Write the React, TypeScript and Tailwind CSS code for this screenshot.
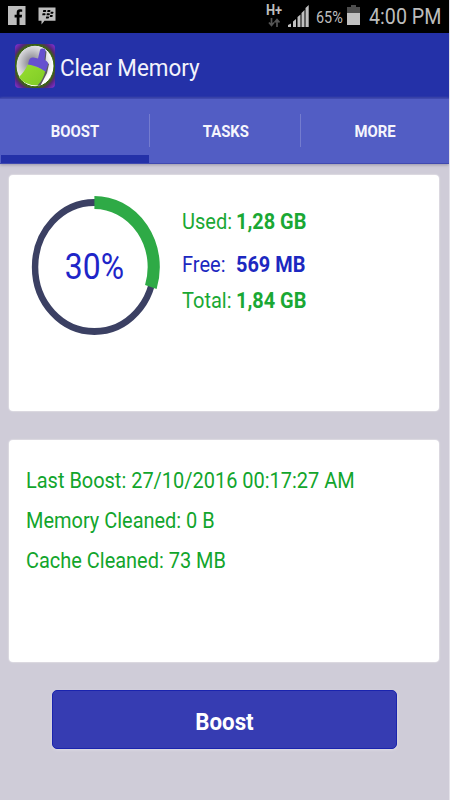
import type { ReactNode } from "react";

function Label({ className, children }: { className: string; children: ReactNode }) {
  return <span className={"inline-block whitespace-pre " + className}>{children}</span>;
}

function StatusBar() {
  return (
    <header className="flex h-[33px] shrink-0 items-start bg-black text-[#bdbdbd]">
      <svg className="ml-2 mt-[6px] h-[19px] w-[18px]" viewBox="0 0 18 19">
        <rect width="17.5" height="19" fill="#bdbdbd" />
        <path d="M14.2 3.4v2.4h-1.5c-1 0-1.2.5-1.2 1.2v1.8h2.6l-.4 2.7h-2.2V19H8.7v-7.5H6.6V8.800h2.100V6.600c0-2.200 1.300-3.300 3.300-3.300z" fill="#000" />
      </svg>
      <svg className="ml-3 mt-[7px] h-[18px] w-[18px]" viewBox="0 0 18 18">
        <path d="M.5.500h17v13.200H6.500L3.500 17.500v-3.800h-3z" fill="#bdbdbd" />
        <g fill="#000">
          <path d="M5.300 3h2.500l.6 1-.8 1H4.900zM9.600 3h2.400l.6 1-.8 1H9.200zM4.600 6.200h2.500l.6 1-.8 1H4.200zM8.900 6.200h2.500l.6 1-.8 1H8.500zM12.800 4.700h2.300l.5 1-.8 1h-2.400zM12.100 8h2.300l.5 1-.8 1h-2.400zM8.200 9.400h2.400l.6 1-.8 1H7.800z" />
        </g>
      </svg>
      <div className="ml-[210px] flex w-[16px] flex-col">
        <Label className="mt-[3px] h-[14px] origin-left scale-x-[0.86] text-[15px] leading-[15px] font-bold">H+</Label>
        <svg className="ml-[2px] mt-[1px] h-[9px] w-[12px]" viewBox="0 0 12 9">
          <path d="M3.500 0v7M1 4.500l2.500 3 2.500-3M9 9V2M6.500 4.500l2.500-3 2.500 3" fill="none" stroke="#555" strokeWidth="1.700" />
        </svg>
      </div>
      <svg className="ml-[6px] mt-[5px] h-[22px] w-[21px]" viewBox="0 0 21 22">
        <path d="M0 22v-2l3-1.500V22zM5 22v-5.500l3-2.500v8zM9.500 22V12l3-2.500V22zM13.500 22V8l3-3v17zM17.500 22V3l3.200-3v22z" fill="#c0c0c0" />
      </svg>
      <div className="ml-[7px] mt-[6px] w-[31px]">
        <Label className="origin-left scale-x-[0.9] text-[16px] leading-[19px]">65%</Label>
      </div>
      <svg className="mt-[5px] h-[20px] w-[14px]" viewBox="0 0 14 20">
        <path d="M4 0h5v2h4v6H0V2h4z" fill="#4d4d4d" />
        <path d="M0 8h13v12H0z" fill="#c0c0c0" />
      </svg>
      <div className="ml-[8px] mt-[4px]">
        <Label className="origin-left scale-x-[0.895] text-[22px] leading-[26px]">4:00 PM</Label>
      </div>
    </header>
  );
}

function BrushIcon() {
  return (
    <svg className="ml-[15px] h-[44px] w-[40px] shrink-0" viewBox="0 0 40 44">
      <defs>
        <radialGradient id="disc" cx="0.42" cy="0.42" r="0.55">
          <stop offset="0" stopColor="#77767f" />
          <stop offset="0.6" stopColor="#cfcfd3" />
          <stop offset="1" stopColor="#fff" />
        </radialGradient>
        <radialGradient id="frame" cx="0.5" cy="0.5" r="0.7">
          <stop offset="0.700" stopColor="#3d5f16" />
          <stop offset="0.800" stopColor="#56257c" />
          <stop offset="1" stopColor="#8a30e0" />
        </radialGradient>
        <linearGradient id="bristle" x1="0" y1="0" x2="1" y2="1">
          <stop offset="0" stopColor="#98de30" />
          <stop offset="1" stopColor="#7ecb26" />
        </linearGradient>
      </defs>
      <rect width="40" height="44" rx="4" fill="url(#frame)" />
      <ellipse cx="20" cy="22" rx="19" ry="20.800" fill="url(#disc)" stroke="#356111" strokeWidth="1" />
      <path d="M28 6l3.500 1.500L30.500 17l3.500 3-2 9-6.500 12.500-3 .5L27 26z" fill="#5b5a5f" />
      <path d="M13 20Q9.500 28 4 33Q9.500 41.500 22.500 41.500Q28.500 35.500 30.500 26z" fill="url(#bristle)" />
      <path d="M25 6q.3-2 2.800-1.500 3.200.2 2.700 2.500L29.500 16q4 1.500 3.500 4.500l-2.300 7.300Q22 21.500 13 20.500l1-4q1-3.500 4.500-3l4.500 1z" fill="#6650cf" />
    </svg>
  );
}

function Tab({ text, active, last }: { text: string; active?: boolean; last?: boolean }) {
  return (
    <div className={"flex shrink-0 flex-col " + (last ? "w-[148px]" : active ? "w-[150px]" : "w-[151px]")}>
      <div className="flex h-[57px] items-center">
        <div className="flex flex-1 justify-center pl-px pt-[9px]">
          <Label className="scale-x-[0.93] text-[16px] leading-5 font-bold">{text}</Label>
        </div>
        {!last && <div className="mt-[7px] h-[33px] w-px bg-[#747ccf]" />}
      </div>
      <div className={"h-[8px] " + (active ? "ml-px mr-px bg-[#2431a8]" : "")} />
    </div>
  );
}

function Gauge() {
  return (
    <div className="grid h-[144px] w-[135px] place-items-center">
      <svg className="col-start-1 row-start-1 h-[144px] w-[135px]" viewBox="0 0 135 144">
        <g transform="translate(67.4 72) scale(0.92 1)" fill="none">
          <circle r="64.500" stroke="#3b4063" strokeWidth="7" />
          <path d="M0 -64.500A64.500 64.500 0 0 1 61.340 19.930" stroke="#2eaa46" strokeWidth="13.200" />
        </g>
      </svg>
      <Label className="col-start-1 row-start-1 scale-x-[0.885] text-[36px] leading-[40px] text-[#1e25c8]">30%</Label>
    </div>
  );
}

function Stat({ name, value, color }: { name: string; value: string; color: string }) {
  return (
    <div className={"flex h-[28px] items-center text-[22px] leading-[28px] " + color}>
      <div className="w-[54px]">
        <Label className="origin-left scale-x-[0.91]">{name}</Label>
      </div>
      <Label className="origin-left scale-x-[0.905] font-bold">{value}</Label>
    </div>
  );
}

export default function App() {
  return (
    <div className="flex h-[800px] w-[450px] flex-col overflow-hidden border-r border-[#e4e2ea] bg-[#cfccd8] font-[Roboto,sans-serif]">
      <div className="-mr-px shrink-0"><StatusBar /></div>
      <div className="flex h-[65px] shrink-0 items-center bg-[#2431a8]">
        <BrushIcon />
        <Label className="ml-[5px] mt-[4px] origin-left scale-x-[0.935] text-[24px] leading-[30px] text-[#f3f3fb]">Clear Memory</Label>
      </div>
      <nav className="flex h-[66px] shrink-0 border-t border-b border-[#4049af] bg-[#525dc4] text-[#f5f5fc] shadow-[0_1px_3px_#9896a8]">
        <Tab text="BOOST" active />
        <Tab text="TASKS" />
        <Tab text="MORE" last />
      </nav>
      <main className="flex flex-col">
        <section className="ml-[9px] mt-[11px] flex h-[236px] w-[430px] rounded-[4px] bg-white shadow-[0_0_1px_1px_#dcdae2]">
          <div className="ml-[18px] mt-[20px]"><Gauge /></div>
          <div className="ml-[20px] mt-[33px] flex flex-col">
            <Stat name="Used:" value="1,28 GB" color="text-[#1aa834]" />
            <div className="mt-[15px]"><Stat name="Free:" value="569 MB" color="text-[#1c28c0]" /></div>
            <div className="mt-[8px]"><Stat name="Total:" value="1,84 GB" color="text-[#1aa834]" /></div>
          </div>
        </section>
        <section className="ml-[9px] mt-[29px] flex h-[222px] w-[430px] flex-col items-start rounded-[4px] bg-white pl-[17px] pt-[21px] text-[22px] leading-[40px] text-[#12a52c] shadow-[0_0_1px_1px_#dcdae2]">
          <Label className="origin-left scale-x-[0.907]">Last Boost: 27/10/2016 00:17:27 AM</Label>
          <Label className="origin-left scale-x-[0.907]">Memory Cleaned: 0 B</Label>
          <Label className="origin-left scale-x-[0.907]">Cache Cleaned: 73 MB</Label>
        </section>
        <button className="ml-[52px] mt-[28px] flex h-[59px] w-[345px] items-center justify-center rounded-[5px] border border-[#1a24ae] bg-[#363cb2] pt-[5px] text-white shadow-[0_1px_3px_#dedbe6]">
          <Label className="scale-x-[0.93] text-[24px] leading-[28px] font-bold">Boost</Label>
        </button>
      </main>
    </div>
  );
}
